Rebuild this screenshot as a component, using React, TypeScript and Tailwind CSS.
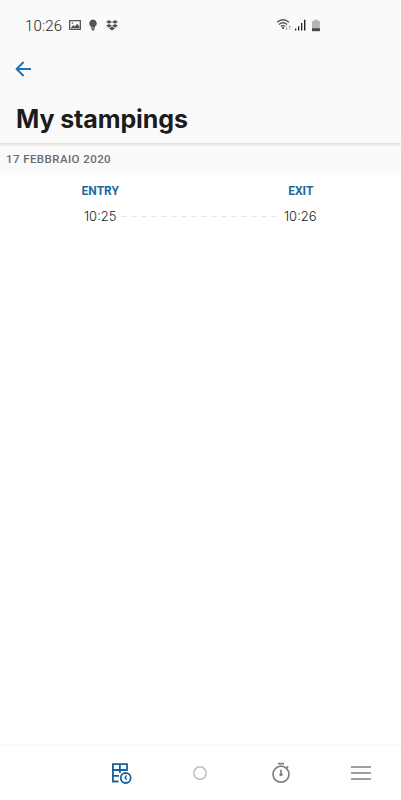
import React from 'react';

type Stamping = {
  entry: string;
  exit: string;
};

type StampingDay = {
  date: string;
  stampings: Stamping[];
};

const days: StampingDay[] = [
  { date: '17 FEBBRAIO 2020', stampings: [{ entry: '10:25', exit: '10:26' }] },
];

const StatusBar: React.FC = () => (
  <div className="flex h-[50px] items-center pl-[25px] pr-[80px] text-[#555]">
    <span className="w-[44px] whitespace-nowrap pt-px font-['Roboto',sans-serif] text-[15px] font-light leading-5 tracking-[0.15px] text-[#222]">
      10:26
    </span>
    <svg className="h-[10px] w-[12px]" viewBox="0 0 12 10" fill="none">
      <rect x="0.6" y="0.6" width="10.8" height="8.8" rx="0.5" stroke="currentColor" strokeWidth="1.4" />
      <path d="M1.6 8.2 4.2 5 5.8 6.5 8.2 3.7 10.4 6.5V8.2Z" fill="currentColor" />
      <circle cx="3.4" cy="3" r="0.8" fill="currentColor" />
    </svg>
    <svg className="ml-[8px] h-[12px] w-[8px]" viewBox="0 0 8 12" fill="currentColor">
      <path d="M4 0.5a3.8 3.8 0 0 0-2 7v1.2h4V7.5a3.8 3.8 0 0 0-2-7ZM2.4 9.3h3.2v1L4.8 11.4H3.2L2.4 10.3Z" />
    </svg>
    <svg className="ml-[9px] h-[11px] w-[12px]" viewBox="0 0 12 11" fill="currentColor">
      <path d="M3 0 6 1.9 3 3.8 0 1.9ZM9 0l3 1.9-3 1.9-3-1.9ZM3 3.9 6 5.8 3 7.7 0 5.8ZM9 3.9l3 1.9-3 1.9-3-1.9ZM6 6.6l3 1.9L6 10.6 3 8.5Z" />
    </svg>
    <div className="ml-auto flex items-center">
      <svg className="h-[14px] w-[16px]" viewBox="0 0 16 14" fill="none">
        <path d="M1 4.2Q7 -0.7 13 4.2M2.9 6.4Q7 3.1 11.1 6.4M4.8 8.4Q7 6.8 9.2 8.4" stroke="#4f4f4f" strokeWidth="1.3" />
        <circle cx="7" cy="10" r="1.1" fill="#444" />
        <path d="M10.5 8v3.5M9.3 10.5l1.2 1.4 1.2-1.4M13.8 11.5V8M12.6 9.2l1.2-1.4L15 9.2" stroke="#aaa" strokeWidth="0.9" />
      </svg>
      <svg className="ml-[3px] h-[12px] w-[11px]" viewBox="0 0 11 12" fill="#222">
        <path d="M0 9.5h1.3v1.9H0ZM3 7.2h1.3v4.2H3ZM6 4h1.3v7.4H6ZM9 0.8h1.4v10.6H9Z" />
      </svg>
      <svg className="ml-[5px] h-[13px] w-[10px]" viewBox="0 0 10 13">
        <path d="M3.1 0.7h3.8V2h2v7.3H1V2h2.1Z" fill="#b5b5b5" />
        <path d="M1 9.2h7.9v3H1Z" fill="#444" />
      </svg>
    </div>
  </div>
);

const Header: React.FC = () => (
  <header className="relative z-10 h-[143px] bg-[#fafafa] shadow-[0_1px_3px_rgba(0,0,0,0.18)]">
    <StatusBar />
    <button className="ml-[15px] mt-[11px] block h-4 w-[17px] text-[#1b75b3]" aria-label="Back">
      <svg className="h-4 w-[17px]" viewBox="0 0 17 16" fill="none" stroke="currentColor" strokeWidth="1.9">
        <path d="M16 8H1.8M8.6 1 1.6 8l7 7" />
      </svg>
    </button>
    <h1 className="ml-[15px] mt-[26px] whitespace-nowrap pl-px font-['Inter',sans-serif] text-[25px] font-bold leading-8 tracking-[-0.1px] text-[#1c1c1c]">
      My stampings
    </h1>
  </header>
);

const StampingRow: React.FC<{ stamping: Stamping }> = ({ stamping }) => (
  <div className="flex h-[26px] items-center font-['Inter',sans-serif] text-[13px] font-light leading-5 text-[#222]">
    <span className="ml-[84px] w-[34px] whitespace-nowrap">{stamping.entry}</span>
    <svg className="ml-[3px] h-px w-[158px]">
      <line x1="0" y1="0.5" x2="158" y2="0.5" stroke="#e8e8e8" strokeDasharray="6 4" />
    </svg>
    <span className="ml-[5px] w-[34px] whitespace-nowrap">{stamping.exit}</span>
  </div>
);

const DaySection: React.FC<{ day: StampingDay }> = ({ day }) => (
  <section>
    <h2 className="flex h-[32px] items-center bg-[#fafafa] pl-[6px] pt-[2px] font-['Roboto',sans-serif] text-[11.5px] font-medium tracking-[0.42px] text-[#6c6c6c]">
      {day.date}
    </h2>
    <div className="grid h-[28px] grid-cols-2 items-center pt-[4px] text-center font-['Roboto',sans-serif] text-[12px] font-bold text-[#1b6ba3]">
      <span>ENTRY</span>
      <span>EXIT</span>
    </div>
    {day.stampings.map((stamping) => (
      <StampingRow key={stamping.entry} stamping={stamping} />
    ))}
  </section>
);

const BottomNav: React.FC = () => (
  <nav className="grid h-[56px] grid-cols-5 border-t-2 border-[#fafafa] bg-white pb-px text-[#808080]">
    <span />
    <button className="flex items-center justify-center pl-[3px] text-[#1b629b]" aria-label="Stampings">
      <svg className="h-[22px] w-[22px]" viewBox="0 0 22 22" fill="none" stroke="currentColor" strokeWidth="1.8">
        <path d="M7.5 19.5H1.9V2.2H16V9M1.9 8H16M1.9 13.8H8M8.9 2.2V11" />
        <circle cx="14.7" cy="16" r="5" />
        <path d="M15.5 13.4 14 15.8l1.9 1.7" strokeWidth="1.4" />
      </svg>
    </button>
    <button className="flex items-center justify-center text-[#bcbcbc]" aria-label="Home">
      <svg className="h-4 w-4" viewBox="0 0 16 16" fill="none" stroke="currentColor" strokeWidth="1.5">
        <circle cx="8" cy="8" r="6.2" />
      </svg>
    </button>
    <button className="flex items-center justify-center" aria-label="Timer">
      <svg className="h-[22px] w-[20px]" viewBox="0 0 20 22" fill="none" stroke="currentColor" strokeWidth="1.7">
        <path d="M7 1.7h6M15.2 6.4l2-2" />
        <circle cx="10" cy="12.2" r="8" />
        <path d="M10 7.7v5" />
        <circle cx="10" cy="12.6" r="1.7" fill="currentColor" stroke="none" />
      </svg>
    </button>
    <button className="flex items-center justify-center" aria-label="Menu">
      <svg className="h-4 w-[20px]" viewBox="0 0 20 16" fill="none" stroke="currentColor" strokeWidth="1.7">
        <path d="M0 2h20M0 8h20M0 14h20" />
      </svg>
    </button>
  </nav>
);

export default function App() {
  return (
    <div className="flex h-[800px] w-[401px] flex-col overflow-hidden bg-white">
      <Header />
      <main className="flex-1">
        {days.map((day) => (
          <DaySection key={day.date} day={day} />
        ))}
      </main>
      <BottomNav />
    </div>
  );
}
